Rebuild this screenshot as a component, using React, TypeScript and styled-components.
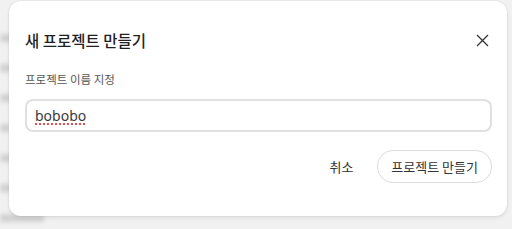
import React, { useState } from 'react';
import styled, { createGlobalStyle } from 'styled-components';

const GlobalStyle = createGlobalStyle`
  html, body {
    margin: 0;
    padding: 0;
    background: #f1f1f1;
    font-family: "Noto Sans CJK KR", "Noto Sans", sans-serif;
  }
`;

const Page = styled.div`
  width: 512px;
  height: 229px;
  overflow: hidden;
  position: relative;
  background: #f1f1f1;
`;

const PageContent = styled.div`
  display: flex;
  flex-direction: column;
  gap: 22px;
  padding: 34px 0 0 0;
  filter: blur(2px);
  opacity: 0.7;
`;

const GhostLine = styled.div<{ $w: number }>`
  width: ${(p) => p.$w}px;
  height: 8px;
  background: #c4c4c4;
  border-radius: 2px;
`;

const Overlay = styled.div`
  position: absolute;
  inset: 0;
  padding: 1px 0 0 9px;
`;

const Modal = styled.div`
  width: 498px;
  height: 215px;
  box-sizing: border-box;
  background: #fff;
  border-radius: 12px;
  box-shadow: 0 2px 4px rgba(0, 0, 0, 0.08), 0 0 0 1px rgba(0, 0, 0, 0.03);
  padding: 26px 16px 0 16px;
  display: flex;
  flex-direction: column;
`;

const Header = styled.div`
  display: flex;
  align-items: center;
  justify-content: space-between;
  height: 26px;
`;

const Title = styled.h2`
  margin: 0;
  font-size: 15.5px;
  font-weight: 500;
  color: #1f1f1f;
`;

const CloseButton = styled.button`
  border: none;
  background: none;
  padding: 0;
  width: 16px;
  height: 16px;
  display: flex;
  align-items: center;
  justify-content: center;
  color: #333;
  margin-right: 1px;
`;

const Label = styled.label`
  margin-top: 18px;
  font-size: 11.5px;
  color: #555;
  height: 16px;
  line-height: 16px;
`;

const Input = styled.input`
  margin-top: 12px;
  width: 467px;
  height: 33px;
  box-sizing: border-box;
  border: 2px solid #e0e0e0;
  border-radius: 8px;
  padding: 0 8px;
  font-family: "Noto Sans", sans-serif;
  font-size: 14px;
  color: #3a3a3a;
  outline: none;
  text-decoration: underline dotted #ea4d4d;
  text-decoration-thickness: 2px;
  text-underline-offset: 2px;
`;

const Footer = styled.div`
  margin-top: 18px;
  display: flex;
  justify-content: flex-end;
  align-items: center;
  gap: 24px;
  width: 467px;
`;

const TextButton = styled.button`
  border: none;
  background: none;
  padding: 0;
  font-family: inherit;
  font-size: 13px;
  color: #333;
`;

const PillButton = styled.button`
  height: 33px;
  box-sizing: border-box;
  padding: 0 13px;
  border: 1px solid #dcdcdc;
  border-radius: 16px;
  background: #fff;
  font-family: inherit;
  font-size: 13px;
  color: #333;
`;

export default function App() {
  const [name, setName] = useState('bobobo');

  return (
    <Page>
      <GlobalStyle />
      <PageContent>
        <GhostLine $w={14} />
        <GhostLine $w={12} />
        <GhostLine $w={14} />
        <GhostLine $w={10} />
        <GhostLine $w={14} />
        <GhostLine $w={12} />
        <GhostLine $w={44} />
      </PageContent>
      <Overlay>
        <Modal>
          <Header>
            <Title>새 프로젝트 만들기</Title>
            <CloseButton aria-label="닫기">
              <svg width="13" height="13" viewBox="0 0 13 13" fill="none" stroke="currentColor" strokeWidth="1.3">
                <path d="M1 1 L12 12 M12 1 L1 12" />
              </svg>
            </CloseButton>
          </Header>
          <Label>프로젝트 이름 지정</Label>
          <Input value={name} onChange={(e) => setName(e.target.value)} spellCheck={false} />
          <Footer>
            <TextButton>취소</TextButton>
            <PillButton>프로젝트 만들기</PillButton>
          </Footer>
        </Modal>
      </Overlay>
    </Page>
  );
}
